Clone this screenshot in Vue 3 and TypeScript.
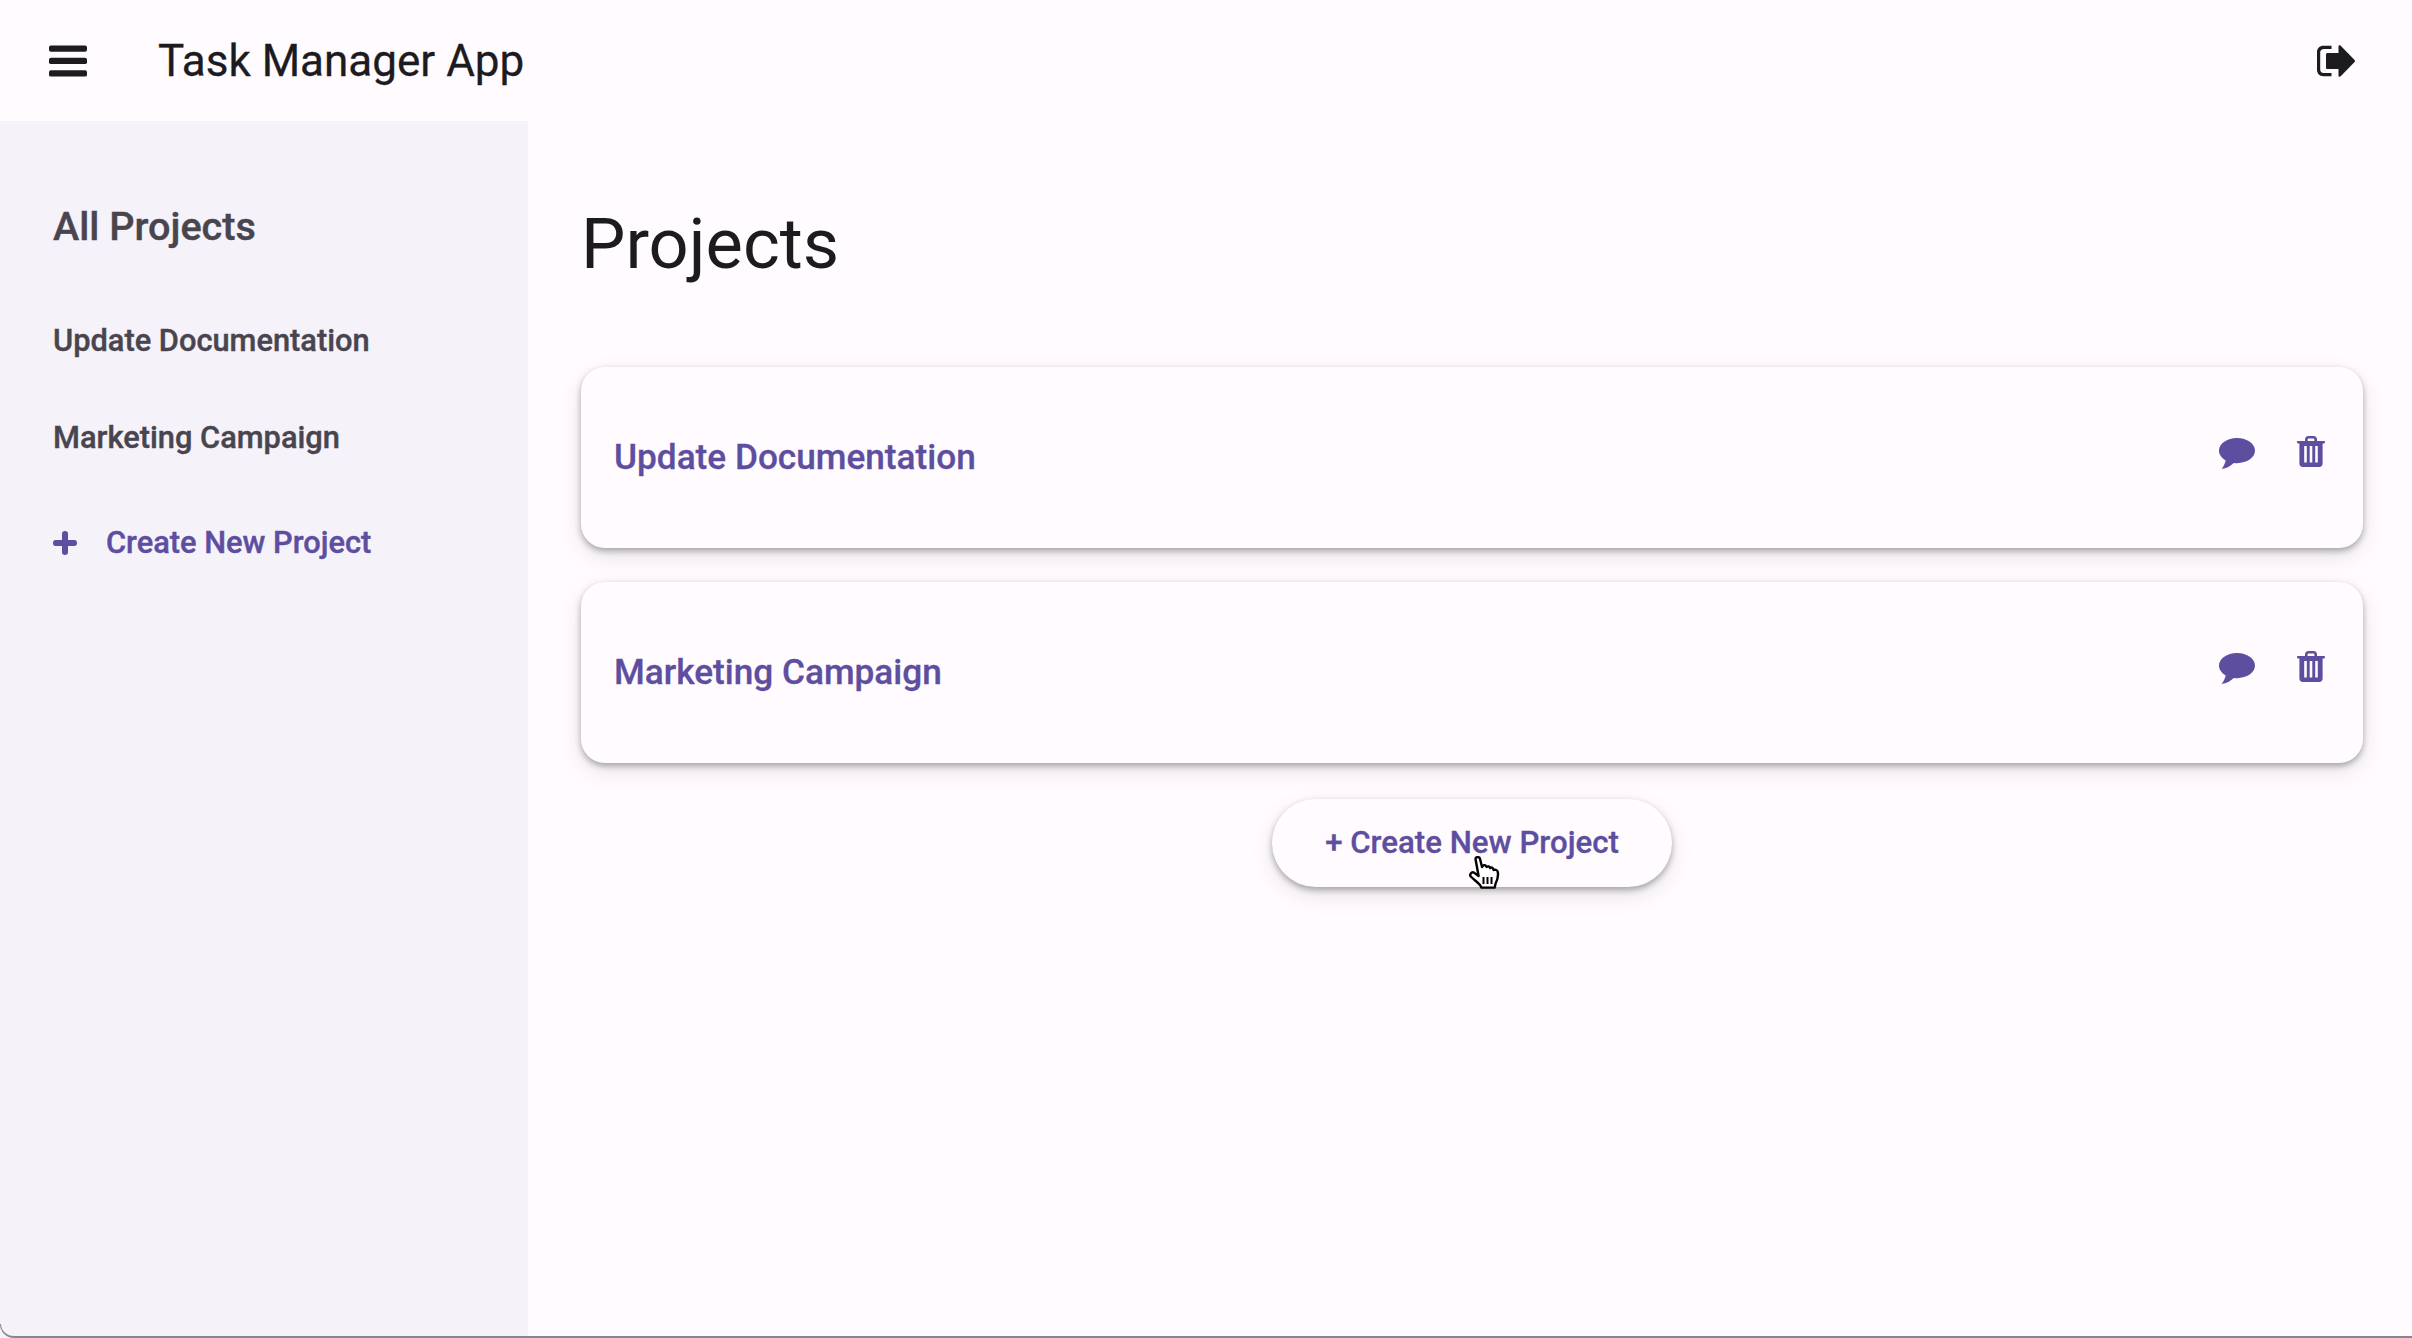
<template>
  <div class="app">
    <header class="topbar">
      <div class="topbar-left">
        <svg class="menu-icon" viewBox="0 0 39 32">
          <rect x="0" y="0" width="39" height="6.5" rx="2" />
          <rect x="0" y="12.7" width="39" height="6.5" rx="2" />
          <rect x="0" y="25.5" width="39" height="6.5" rx="2" />
        </svg>
        <span class="app-title">Task Manager App</span>
      </div>
      <svg class="logout-icon" viewBox="0 0 39 32">
        <path d="M15.5 0.8H7.5C3.6 0.8 1 3.4 1 7.2V24.8C1 28.6 3.6 31.2 7.5 31.2H15.5V28H8C5.6 28 4.2 26.6 4.2 24.4V7.6C4.2 5.4 5.6 4 8 4H15.5Z" />
        <path d="M10 9.6C10 8.6 10.6 8 11.6 8H22.5V1.6C22.5 0.4 23.8 -0.2 24.7 0.7L38.6 15C39.1 15.6 39.1 16.4 38.6 17L24.7 31.3C23.8 32.2 22.5 31.6 22.5 30.4V24H11.6C10.6 24 10 23.4 10 22.4Z" />
      </svg>
    </header>

    <div class="body">
      <aside class="sidebar">
        <h2 class="side-heading">All Projects</h2>
        <a v-for="p in projects" :key="p" class="side-link">{{ p }}</a>
        <a class="side-create">
          <svg class="plus-icon" viewBox="0 0 24 24">
            <path d="M9 2.5C9 1 10.2 0 12 0S15 1 15 2.5V9H21.5C23 9 24 10.2 24 12S23 15 21.5 15H15V21.5C15 23 13.8 24 12 24S9 23 9 21.5V15H2.5C1 15 0 13.8 0 12S1 9 2.5 9H9Z" />
          </svg>
          Create New Project
        </a>
      </aside>

      <main class="main">
        <h1 class="page-title">Projects</h1>
        <div class="cards">
          <div v-for="p in projects" :key="p" class="card">
            <span class="card-title">{{ p }}</span>
            <div class="card-actions">
              <svg class="comment-icon" viewBox="0 0 36 31">
                <path d="M18 0C8 0 0 5.6 0 12.6C0 16.6 2.6 20.2 6.7 22.5C6.2 25.6 4.2 28.8 2.6 31C7.2 30.4 12 28 14.8 25C15.8 25.1 16.9 25.2 18 25.2C28 25.2 36 19.6 36 12.6S28 0 18 0Z" />
              </svg>
              <svg class="trash-icon" viewBox="0 0 28 31">
                <path fill-rule="evenodd" d="M8 5V3.4C8 1.4 9.4 0 11.4 0H16.6C18.6 0 20 1.4 20 3.4V5H27C27.6 5 28 5.4 28 6S27.6 7.4 27 7.4H25.6V27.6C25.6 29.6 24.2 31 22.2 31H5.8C3.8 31 2.4 29.6 2.4 27.6V7.4H1C0.4 7.4 0 7 0 6S0.4 5 1 5ZM10.6 5H17.4V3.6C17.4 3 17 2.6 16.4 2.6H11.6C11 2.6 10.6 3 10.6 3.6ZM7.2 10V26.5H9.8V10ZM12.7 10V26.5H15.3V10ZM18.2 10V26.5H20.8V10Z" />
              </svg>
            </div>
          </div>
        </div>
        <button class="create-btn">
          <span class="create-label">+ Create New Project</span>
          <svg class="hand-cursor" viewBox="0 0 31 33">
            <path d="M6.5 3C6.5 0.6 10.4 0.4 11 2.8L13 11L14 9.8C15 8.6 16.8 9 17.2 10.4L17.8 11C18.8 9.8 20.6 10.4 21 12C22.2 11 24 11.6 24.3 13.2L24.8 14C26.5 13.2 28.4 14.2 28.8 16C29.4 19.5 28.4 24 26.6 27.5L25.6 31.6H12.5L11 29C8.5 26 5 23.8 1.8 20.5C0.2 18.6 2.4 15.4 5 16.6L9.6 20Z" fill="#fff" stroke="#000" stroke-width="2.4" stroke-linejoin="round" />
            <path d="M14.5 21V28M18.5 21V28M22.5 21V28" stroke="#000" stroke-width="2" fill="none" />
          </svg>
        </button>
      </main>
    </div>
    <div class="window-edge"></div>
  </div>
</template>

<script setup lang="ts">
const projects: string[] = ['Update Documentation', 'Marketing Campaign']
</script>

<style>
html, body {
  margin: 0;
  background: #fffbff;
}
</style>

<style scoped>
.app {
  position: relative;
  display: flex;
  flex-direction: column;
  height: 1338px;
  overflow: hidden;
  background: #fffbff;
  font-family: Roboto, "Liberation Sans", sans-serif;
  color: #1c1b1f;
}

/* top bar */
.topbar {
  display: flex;
  align-items: center;
  justify-content: space-between;
  height: 121px;
  padding: 0 57px 0 49px;
  flex-shrink: 0;
}
.topbar-left {
  display: flex;
  align-items: center;
  gap: 71px;
}
.menu-icon {
  width: 38px;
  height: 32px;
  fill: #1c1b1f;
}
.app-title {
  font-size: 44px;
  line-height: 60px;
  -webkit-text-stroke: 0.3px #1c1b1f;
}
.logout-icon {
  width: 39px;
  height: 32px;
  fill: #1c1b1f;
}

.body {
  display: flex;
  flex: 1;
  min-height: 0;
}

/* sidebar */
.sidebar {
  width: 528px;
  flex-shrink: 0;
  box-sizing: border-box;
  padding: 79px 0 0 53px;
  background: #f6f2fa;
  color: #49454f;
}
.side-heading {
  margin: 0 0 67px;
  font-size: 39.6px;
  line-height: 54px;
  font-weight: 500;
  -webkit-text-stroke: 0.4px #49454f;
}
.side-link {
  display: block;
  height: 97px;
  font-size: 30.8px;
  line-height: 40px;
  font-weight: 500;
  -webkit-text-stroke: 0.4px #49454f;
}
.side-create {
  display: flex;
  align-items: center;
  gap: 29px;
  margin-top: 8px;
  font-size: 30.8px;
  line-height: 40px;
  font-weight: 500;
  color: #5e4e9f;
  -webkit-text-stroke: 0.4px #5e4e9f;
}
.plus-icon {
  width: 24px;
  height: 24px;
  fill: #5e4e9f;
}

/* main column */
.main {
  flex: 1;
  display: flex;
  flex-direction: column;
  align-items: center;
  min-width: 0;
  padding: 0 49px 0 53px;
}
.page-title {
  align-self: flex-start;
  margin: 79px 0 0;
  height: 167px;
  font-size: 70.4px;
  line-height: 88px;
  font-weight: 400;
}
.cards {
  display: flex;
  flex-direction: column;
  gap: 34px;
  width: 100%;
}
.card {
  display: flex;
  align-items: center;
  justify-content: space-between;
  height: 181px;
  box-sizing: border-box;
  padding: 0 38px 2px 33px;
  border-radius: 24px;
  background: #fffbff;
  box-shadow: 0 3px 6px rgba(0, 0, 0, 0.3), 0 8px 24px rgba(0, 0, 0, 0.1);
}
.card-title {
  font-size: 35.2px;
  line-height: 48px;
  font-weight: 500;
  color: #5e4e9f;
  -webkit-text-stroke: 0.3px #5e4e9f;
}
.card-actions {
  display: flex;
  align-items: center;
  gap: 42px;
  margin-top: -10px;
}
.comment-icon {
  width: 36px;
  height: 31px;
  fill: #5e4e9f;
  margin-top: 4px;
}
.trash-icon {
  width: 28px;
  height: 31px;
  fill: #5e4e9f;
}

.create-btn {
  position: relative;
  margin-top: 36px;
  width: 400px;
  height: 88px;
  padding: 0 0 2px;
  border: 0;
  border-radius: 44px;
  background: #fffbff;
  box-shadow: 0 3px 6px rgba(0, 0, 0, 0.3), 0 8px 24px rgba(0, 0, 0, 0.1);
  font-family: inherit;
  font-size: 31.2px;
  font-weight: 500;
  color: #5e4e9f;
}
.create-label {
  -webkit-text-stroke: 0.3px #5e4e9f;
}
.hand-cursor {
  position: absolute;
  left: 197px;
  top: 57px;
  width: 31px;
  height: 33px;
}

/* dark rounded edge at the bottom of the captured window */
.window-edge {
  position: absolute;
  left: 0;
  right: 0;
  bottom: 0;
  height: 14px;
  box-sizing: border-box;
  border-bottom: 2px solid #8a868e;
  border-left: 1px solid #8a868e;
  border-bottom-left-radius: 14px;
}
</style>
